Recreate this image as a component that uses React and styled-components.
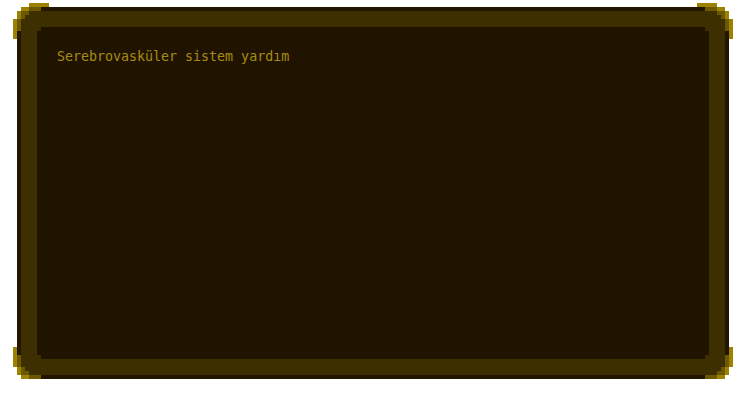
import styled, { createGlobalStyle } from "styled-components";

const Global = createGlobalStyle`
  body {
    margin: 0;
    background: #ffffff;
  }
`;

const Page = styled.div`
  padding: 7px 0 0 17px;
`;

const FrameWrap = styled.div`
  position: relative;
  width: 712px;
  height: 372px;
`;

// square 4px notch on each corner
const notch = (n) => `polygon(
  ${n}px 0, calc(100% - ${n}px) 0, calc(100% - ${n}px) ${n}px, 100% ${n}px,
  100% calc(100% - ${n}px), calc(100% - ${n}px) calc(100% - ${n}px), calc(100% - ${n}px) 100%,
  ${n}px 100%, ${n}px calc(100% - ${n}px), 0 calc(100% - ${n}px),
  0 ${n}px, ${n}px ${n}px
)`;

const Frame = styled.div`
  box-sizing: border-box;
  width: 100%;
  height: 100%;
  border: 4px solid #221600;
  background: #3d2f00;
  padding: 16px;
  clip-path: ${notch(4)};
`;

const Screen = styled.div`
  box-sizing: border-box;
  width: 100%;
  height: 100%;
  background: #201400;
  padding: 22px 20px;
  clip-path: ${notch(4)};
`;

const Line = styled.div`
  font-family: "DejaVu Sans Mono", "Liberation Mono", monospace;
  font-size: 13.3px;
  line-height: 16px;
  color: #a88c12;
  -webkit-font-smoothing: none;
`;

const CornerSvg = styled.svg`
  position: absolute;
  width: 36px;
  height: 36px;
  ${(p) => (p.$right ? "right: -4px;" : "left: -4px;")}
  ${(p) => (p.$bottom ? "bottom: -4px;" : "top: -4px;")}
  transform: scale(${(p) => (p.$right ? -1 : 1)}, ${(p) => (p.$bottom ? -1 : 1)});
  shape-rendering: crispEdges;
`;

const Corner = (props) => (
  <CornerSvg viewBox="0 0 36 36" {...props}>
    <g fill="#9c8200">
      <rect x="16" y="0" width="20" height="4" />
      <rect x="8" y="4" width="8" height="4" />
      <rect x="4" y="8" width="4" height="8" />
      <rect x="0" y="16" width="4" height="20" />
    </g>
    <g fill="#6b5800">
      <rect x="16" y="4" width="12" height="4" />
      <rect x="4" y="16" width="4" height="12" />
      <rect x="8" y="8" width="8" height="4" />
      <rect x="8" y="12" width="4" height="4" />
    </g>
  </CornerSvg>
);

export default function App() {
  return (
    <>
      <Global />
      <Page>
        <FrameWrap>
          <Frame>
            <Screen>
              <Line>Serebrovasküler sistem yardım</Line>
            </Screen>
          </Frame>
          <Corner />
          <Corner $right />
          <Corner $bottom />
          <Corner $right $bottom />
        </FrameWrap>
      </Page>
    </>
  );
}
